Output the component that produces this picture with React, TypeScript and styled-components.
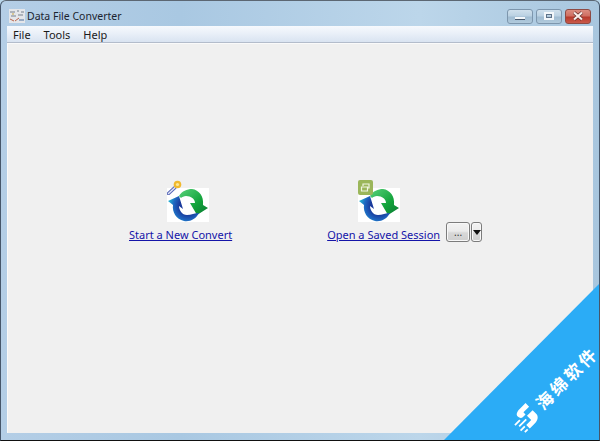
import React from "react";
import styled, { createGlobalStyle } from "styled-components";

const GlobalStyle = createGlobalStyle`
  html, body {
    margin: 0;
    padding: 0;
    background: #b9d6ea;
  }
  * {
    box-sizing: border-box;
  }
`;

const Window = styled.div`
  width: 600px;
  height: 441px;
  position: relative;
  overflow: hidden;
  display: flex;
  flex-direction: column;
  padding: 0 6px 7px 6px;
  border: 1px solid #46566a;
  border-bottom-color: #111;
  border-top-color: #5c6773;
  border-radius: 6px 6px 0 0;
  background: linear-gradient(90deg, #b4cee6 0%, #a9c8e2 30%, #bcd6ea 70%, #a8c6de 100%);
  font-family: "Noto Sans", sans-serif;
  color: #1c1c1c;
`;

const TitleBar = styled.div`
  height: 25px;
  flex: none;
  display: flex;
  align-items: center;
  gap: 2px;
  padding: 5px 0 0 2px;
`;

const AppIcon = styled.svg`
  width: 16px;
  height: 14px;
  flex: none;
`;

const Title = styled.span`
  font-size: 10.5px;
  color: #1b2430;
`;

const Controls = styled.div`
  margin-left: auto;
  display: flex;
  gap: 3px;
  padding-right: 2px;
`;

const Control = styled.div<{ $close?: boolean; $w: number }>`
  width: ${(p) => p.$w}px;
  height: 15px;
  display: flex;
  align-items: center;
  justify-content: center;
  border: 1px solid ${(p) => (p.$close ? "#8e4a44" : "#7d96ad")};
  border-radius: 3px;
  background: ${(p) =>
    p.$close
      ? "linear-gradient(#dc8d80 0%, #cf6f62 45%, #b83a2c 55%, #c9594a 100%)"
      : "linear-gradient(#cfe0ec 0%, #bbd1e2 45%, #a0bcd2 55%, #b2cbdd 100%)"};
`;

const MinGlyph = styled.div`
  width: 10px;
  height: 3px;
  margin-top: 4px;
  background: #f3f7fa;
  border: 1px solid #45566a;
  border-width: 0 0 1px 0;
`;

const MaxGlyph = styled.div`
  width: 10px;
  height: 8px;
  border: 2px solid #f3f7fa;
  outline: 1px solid #5f7389;
  outline-offset: -3px;
`;

const CloseGlyph = styled.svg`
  width: 12px;
  height: 10px;
`;

const MenuBar = styled.div`
  height: 17px;
  flex: none;
  display: flex;
  align-items: center;
  gap: 13px;
  padding: 1px 0 0 6px;
  background: linear-gradient(#f6f9fd 0%, #eaf0f8 45%, #d9e3f1 100%);
  border-bottom: 1px solid #b3bccb;
`;

const MenuItem = styled.span`
  font-size: 11px;
  color: #1a1a1a;
`;

const Client = styled.div`
  flex: 1;
  display: flex;
  align-items: flex-start;
  gap: 95px;
  padding: 137px 0 0 122px;
  background: #f0f0f0;
  box-shadow: inset 1px 1px 0 #fafafa;
`;

const Action = styled.div`
  display: flex;
  flex-direction: column;
  align-items: flex-start;
`;

const IconBox = styled.div<{ $offset: number }>`
  position: relative;
  width: 42px;
  height: 34px;
  margin: 8px 0 0 ${(p) => p.$offset}px;
  background: #fff;
`;

const ConvertSvg = styled.svg`
  display: block;
  width: 42px;
  height: 34px;
`;

const Badge = styled.svg<{ $w: number }>`
  position: absolute;
  left: 0;
  top: -8px;
  width: ${(p) => p.$w}px;
  height: 15px;
`;

const LinkRow = styled.div`
  height: 20px;
  display: flex;
  align-items: flex-end;
  gap: 6px;
`;

const ActionLink = styled.a`
  font-size: 11px;
  line-height: 15px;
  color: #1414a8;
  text-decoration: underline;
  cursor: pointer;
`;

const Buttons = styled.div`
  display: flex;
  gap: 1px;
`;

const SmallButton = styled.div<{ $w: number }>`
  width: ${(p) => p.$w}px;
  height: 20px;
  display: flex;
  align-items: center;
  justify-content: center;
  border: 1px solid #7c7c7c;
  border-radius: 3px;
  background: linear-gradient(#f2f2f2 0%, #ebebeb 45%, #d8d8d8 55%, #cfcfcf 100%);
  box-shadow: inset 0 0 0 1px #f8f8f8;
  font-size: 10px;
  color: #333;
`;

const Caret = styled.div`
  width: 0;
  height: 0;
  border-left: 4px solid transparent;
  border-right: 4px solid transparent;
  border-top: 5px solid #111;
`;

const Corner = styled.div`
  position: absolute;
  right: -1px;
  bottom: -1px;
  width: 157px;
  height: 158px;
  background: #2bacf6;
  clip-path: polygon(100% 0, 100% 100%, 0 100%);
`;

const Stamp = styled.div`
  position: absolute;
  left: 73px;
  top: 132px;
  display: flex;
  align-items: center;
  gap: 5px;
  transform: rotate(-45deg);
  transform-origin: left center;
  white-space: nowrap;
  color: #fff;
`;

const StampLogo = styled.svg`
  width: 26px;
  height: 24px;
  flex: none;
`;

const StampText = styled.span`
  font-family: "Noto Sans CJK SC", sans-serif;
  font-size: 17px;
  font-weight: 700;
  letter-spacing: 3px;
`;

function ConvertIcon() {
  return (
    <ConvertSvg viewBox="0 0 42 34">
      <defs>
        <linearGradient id="grn" x1="0" y1="0" x2="1" y2="1">
          <stop offset="0" stopColor="#58d27a" />
          <stop offset="0.6" stopColor="#12a23a" />
          <stop offset="1" stopColor="#0c7a35" />
        </linearGradient>
        <radialGradient id="blu" gradientUnits="userSpaceOnUse" cx="21" cy="18" r="19">
          <stop offset="0.45" stopColor="#1a3a9c" />
          <stop offset="0.75" stopColor="#1f66c0" />
          <stop offset="1" stopColor="#22a8d0" />
        </radialGradient>
      </defs>
      <path
        d="M12 8C15 3 20 1 25 1C32 2 37 8 36 17L41 20L30 27L23 15L28 15C28 11 24 8 19 8C17 8 15 9 14 10Z"
        fill="url(#grn)"
      />
      <path
        d="M1 13L12 8L16 21L12 18C12 22 15 27 20 27C24 27 28 25 32 25C29 31 23 34 17 33C9 31 5 24 6 17Z"
        fill="url(#blu)"
      />
    </ConvertSvg>
  );
}

export default function App() {
  return (
    <>
      <GlobalStyle />
      <Window>
        <TitleBar>
          <AppIcon viewBox="0 0 16 14">
            <rect x="0" y="0" width="16" height="14" fill="#e4e6ea" />
            <path d="M1 3h5M8 2h2M12 3h3M2 7h5M9 6h5" stroke="#77808c" />
            <path d="M1 10l4 2M6 12l4-3" stroke="#b8654c" />
            <path d="M10 11h5" stroke="#4b6f9b" />
            <path d="M3 5h2" stroke="#c9a53d" />
          </AppIcon>
          <Title>Data File Converter</Title>
          <Controls>
            <Control $w={26}>
              <MinGlyph />
            </Control>
            <Control $w={26}>
              <MaxGlyph />
            </Control>
            <Control $w={26} $close>
              <CloseGlyph viewBox="0 0 12 10">
                <path d="M2 1.5l8 7M10 1.5l-8 7" stroke="#5a2a26" strokeWidth="3.4" />
                <path d="M2 1.5l8 7M10 1.5l-8 7" stroke="#fbeeea" strokeWidth="2.2" />
              </CloseGlyph>
            </Control>
          </Controls>
        </TitleBar>
        <MenuBar>
          <MenuItem>File</MenuItem>
          <MenuItem>Tools</MenuItem>
          <MenuItem>Help</MenuItem>
        </MenuBar>
        <Client>
          <Action>
            <IconBox $offset={38}>
              <ConvertIcon />
              <Badge $w={18} viewBox="0 0 18 15">
                <path d="M1.5 13.5L8 7.5" stroke="#5a68b8" strokeWidth="3.4" strokeLinecap="round" />
                <path d="M1.5 13.5L8 7.5" stroke="#dfe4f5" strokeWidth="1.4" strokeLinecap="round" />
                <circle cx="10.5" cy="4.5" r="3.8" fill="#f1b92e" />
                <circle cx="10.5" cy="4.5" r="1.6" fill="#fbe89a" />
              </Badge>
            </IconBox>
            <LinkRow>
              <ActionLink>Start a New Convert</ActionLink>
            </LinkRow>
          </Action>
          <Action>
            <IconBox $offset={31}>
              <ConvertIcon />
              <Badge $w={15} viewBox="0 0 15 15">
                <rect width="15" height="15" rx="2" fill="#9bb65a" />
                <path d="M5 6V4h6v4H9M3.5 7h6v4h-6z" fill="none" stroke="#f1f5e2" strokeWidth="1.2" />
              </Badge>
            </IconBox>
            <LinkRow>
              <ActionLink>Open a Saved Session</ActionLink>
              <Buttons>
                <SmallButton $w={24}>...</SmallButton>
                <SmallButton $w={11}>
                  <Caret />
                </SmallButton>
              </Buttons>
            </LinkRow>
          </Action>
        </Client>
        <Corner>
          <Stamp>
            <StampLogo viewBox="0 0 26 24">
              <path d="M9 5C9 2 12 1 16 1H24V6H16V9H12C10 9 9 7 9 5Z" fill="#fff" />
              <path d="M16 11H24V16C24 20 20 22 16 22H9V17H16Z" fill="#fff" />
              <path d="M1 9H8M3 13H13M1 17H7M3 21H7" stroke="#fff" strokeWidth="1.8" />
            </StampLogo>
            <StampText>海绵软件</StampText>
          </Stamp>
        </Corner>
      </Window>
    </>
  );
}
